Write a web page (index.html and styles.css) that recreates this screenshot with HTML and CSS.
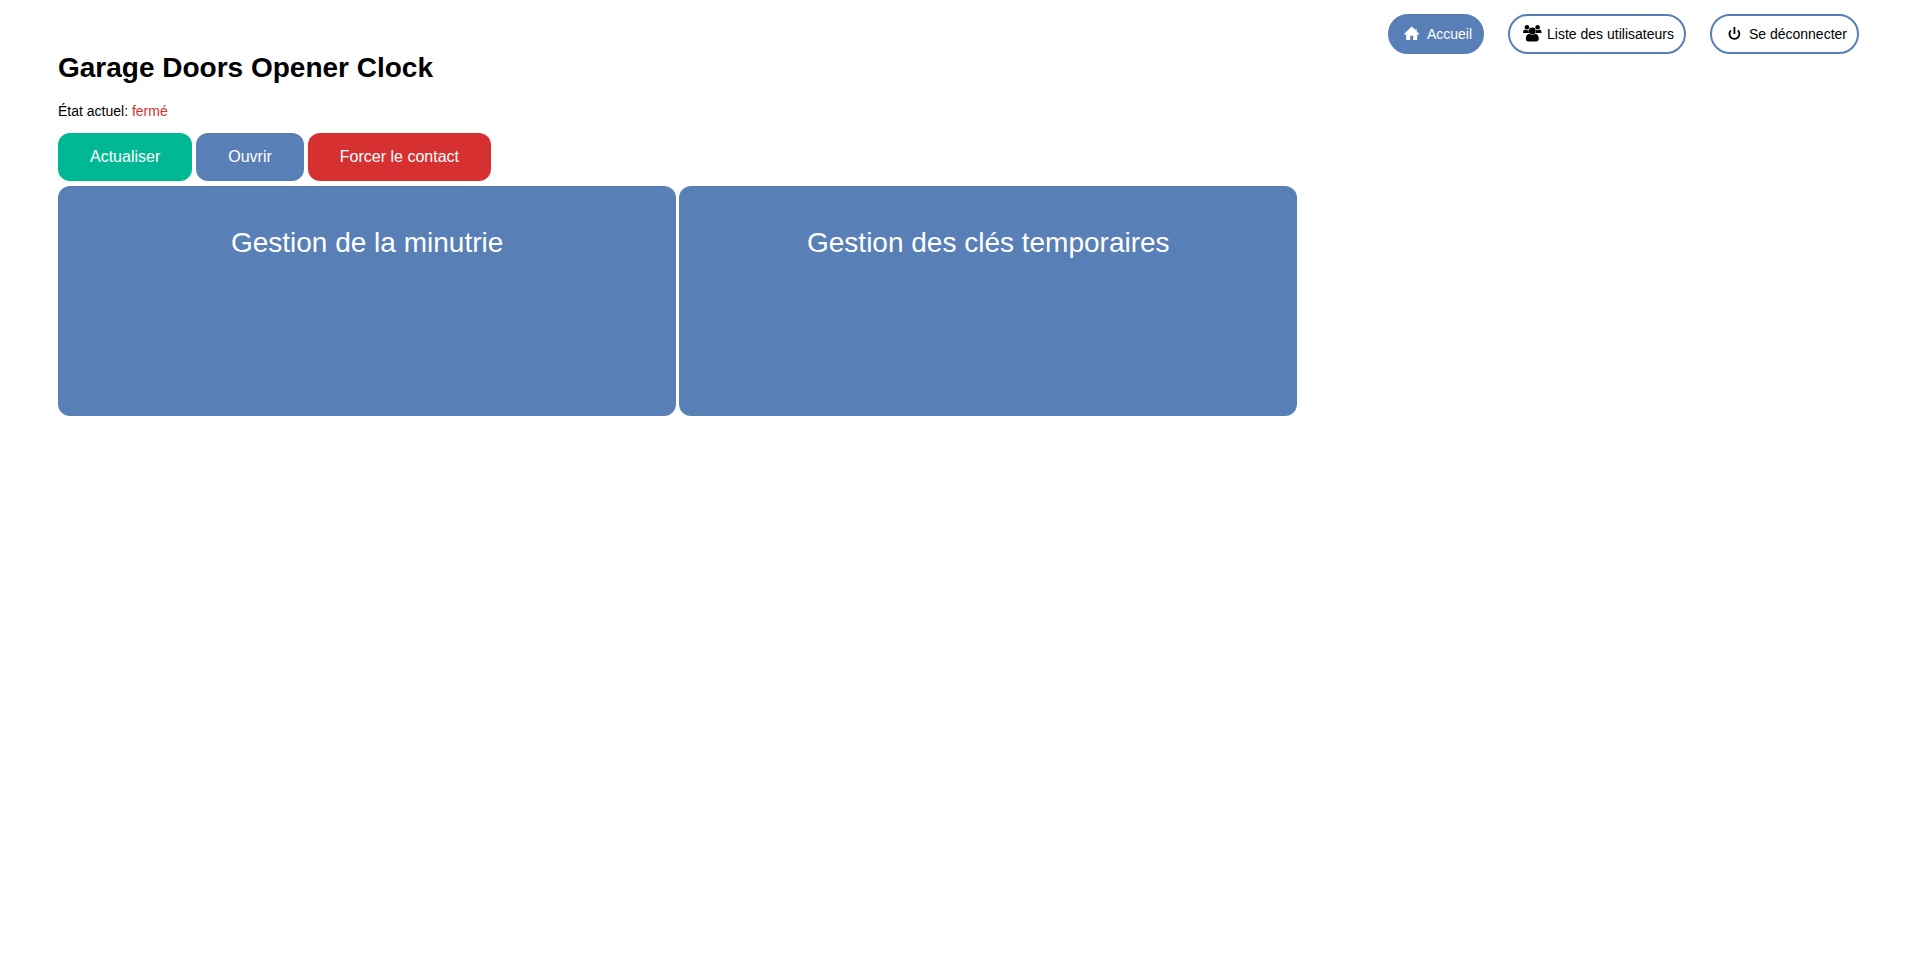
FILE: index.html
```html
<!DOCTYPE html>
<html lang="fr">
<head>
<meta charset="utf-8">
<title>Garage Doors Opener Clock</title>
<link rel="stylesheet" href="styles.css">
</head>
<body>
<nav class="nav">
  <a class="nav-link active" href="#"><svg class="icon" viewBox="0 0 20 20" aria-hidden="true"><path d="M9.700 2.400 2.300 9.700v.8h1.900V16h4V11.700h3V16h4v-5.500h1.900v-.8L14.800 7.400V5.200h-1.300v.9z"/></svg>Accueil</a>
  <a class="nav-link" href="#"><svg class="icon" viewBox="0 0 20 20" aria-hidden="true"><circle cx="5" cy="3.300" r="2.300"/><circle cx="15.600" cy="3.300" r="2.300"/><path d="M1 8.800c0-1.900.9-3.200 2.100-3.200 1 .8 2.600.8 3.500.1-.1 1.300.1 2.300.6 3.200H2.600C1.500 8.900 1 9.100 1 8.800zM19.600 8.800c0-1.900-.9-3.200-2.100-3.200-1 .8-2.600.8-3.500.1.100 1.300-.1 2.300-.6 3.200H18c1.100 0 1.600.2 1.600-.1z"/><circle cx="10.300" cy="7" r="3.400"/><path d="M6.900 9.700c2 1.500 4.800 1.500 6.800 0 2 .6 3.100 2.400 3.100 4.900 0 2-1 2.900-2.800 2.900H6.600c-1.800 0-2.800-.9-2.800-2.900 0-2.500 1.100-4.300 3.100-4.900z"/></svg>Liste des utilisateurs</a>
  <a class="nav-link" href="#"><svg class="icon stroke" viewBox="0 0 20 20" aria-hidden="true"><path d="M10.400 3v7M6.900 6.300a5 5 0 1 0 7 0"/></svg>Se déconnecter</a>
</nav>
<main class="main">
  <h1 class="title">Garage Doors Opener Clock</h1>
  <p class="state">État actuel: <span class="closed">fermé</span></p>
  <div class="actions">
    <button class="btn refresh" type="button">Actualiser</button>
    <button class="btn" type="button">Ouvrir</button>
    <button class="btn danger" type="button">Forcer le contact</button>
  </div>
  <div class="cards">
    <a class="card" href="#">Gestion de la minutrie</a>
    <a class="card" href="#">Gestion des clés temporaires</a>
  </div>
</main>
</body>
</html>
```
FILE: styles.css
```css
* { box-sizing: border-box; }
body {
  margin: 0;
  padding: 14px 58px 40px;
  background: #fff;
  color: #000;
  font: 14px/20px "Liberation Sans", Arial, sans-serif;
}
.nav {
  display: flex;
  justify-content: flex-end;
  gap: 24px;
  padding-right: 11px;
}
.nav-link {
  display: flex;
  align-items: center;
  gap: 5px;
  height: 40px;
  padding: 0 10px 0 12px;
  border: 2px solid #587fb6;
  border-radius: 20px;
  color: #000;
  text-decoration: none;
}
.nav-link.active { background: #587fb6; color: #fff; }
.icon { width: 20px; height: 20px; fill: currentColor; }
.icon.stroke { fill: none; stroke: currentColor; stroke-width: 1.8; }
.title { margin: -4px 0 0; font-size: 28px; line-height: 36px; }
.state { margin: 15px 0 12px; }
.closed { color: #d63031; }
.actions { display: flex; gap: 4px; }
.btn {
  padding: 15px 32px;
  border: 0;
  border-radius: 12px;
  background: #587fb6;
  color: #fff;
  font: 16px/18px "Liberation Sans", Arial, sans-serif;
}
.refresh { background: #00b894; }
.danger { background: #d63031; }
.cards {
  display: grid;
  grid-template-columns: repeat(2, 1fr);
  gap: 3px;
  width: 68.4%;
  margin-top: 5px;
}
.card {
  min-height: 230px;
  padding: 40px;
  border-radius: 12px;
  background: #587fb6;
  color: #fff;
  font-size: 28px;
  line-height: 34px;
  text-align: center;
  text-decoration: none;
}
```
